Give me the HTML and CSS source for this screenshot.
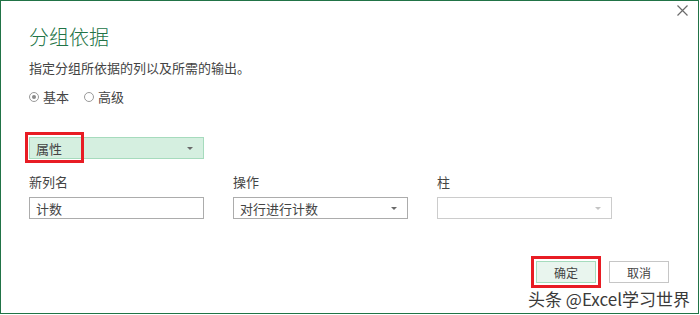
FILE: index.html
```html
<!DOCTYPE html>
<html>
<head>
    <title>分组依据</title>
    <link rel="stylesheet" href="styles.css">
</head>
<body>

<div class="dialog">
    <button class="close-btn" aria-label="关闭">
        <svg width="11" height="11" viewBox="0 0 11 11"><path d="M0.5 0.5 L10.5 10.5 M10.5 0.5 L0.5 10.5" stroke="#6b6b6b" stroke-width="1.2"/></svg>
    </button>

    <h1 class="title">分组依据</h1>
    <p class="subtitle">指定分组所依据的列以及所需的输出。</p>

    <div class="radio-row">
        <label class="radio"><span class="dot checked"></span>基本</label>
        <label class="radio"><span class="dot"></span>高级</label>
    </div>

    <div class="group-select">
        <span class="select-text">属性</span>
        <span class="arrow"></span>
        <span class="mark"></span>
    </div>

    <div class="fields">
        <div class="field">
            <label>新列名</label>
            <div class="box">计数</div>
        </div>
        <div class="field">
            <label>操作</label>
            <div class="box">对行进行计数<span class="arrow"></span></div>
        </div>
        <div class="field">
            <label>柱</label>
            <div class="box disabled"><span class="arrow"></span></div>
        </div>
    </div>

    <div class="footer">
        <button class="btn primary">确定</button>
        <button class="btn">取消</button>
    </div>

    <div class="watermark">头条 @Excel学习世界</div>
</div>

</body>
</html>
```

FILE: styles.css
```css
:root {
    --green: #217346;
    --text-color: #444444;
    --select-bg: #d5efe0;
    --select-border: #a6dbbd;
    --input-border: #acacac;
    --mark-red: #e81c24;
}

body {
    margin: 0;
    font-family: "Noto Sans CJK SC", "Microsoft YaHei", sans-serif;
    color: var(--text-color);
    background: #ffffff;
}

.dialog {
    position: relative;
    width: 699px;
    height: 314px;
    box-sizing: border-box;
    border: 1px solid var(--green);
    padding: 23px 29px 0 28px;
}

.close-btn {
    position: absolute;
    top: 4px;
    right: 10px;
    background: none;
    border: none;
    padding: 0;
    line-height: 0;
}

.title {
    margin: 0;
    font-size: 20px;
    font-weight: 300;
    line-height: 26px;
    color: var(--green);
}

.subtitle {
    margin: 9px 0 0 0;
    font-size: 13px;
    line-height: 18px;
}

.radio-row {
    display: flex;
    gap: 15px;
    margin-top: 12px;
    font-size: 13px;
    line-height: 16px;
}

.radio {
    display: flex;
    align-items: center;
    gap: 4px;
}

.dot {
    width: 10px;
    height: 10px;
    box-sizing: border-box;
    border: 1px solid #9a9a9a;
    border-radius: 50%;
    position: relative;
}

.dot.checked::after {
    content: "";
    position: absolute;
    left: 2px;
    top: 2px;
    width: 4px;
    height: 4px;
    border-radius: 50%;
    background: #8a8a8a;
}

.group-select {
    position: relative;
    display: flex;
    align-items: center;
    width: 175px;
    height: 22px;
    box-sizing: border-box;
    margin-top: 32px;
    padding: 0 10px 0 6px;
    background: var(--select-bg);
    border: 1px solid var(--select-border);
    font-size: 13px;
}

.select-text {
    flex: 1;
}

.arrow {
    width: 0;
    height: 0;
    border-left: 3px solid transparent;
    border-right: 3px solid transparent;
    border-top: 3px solid #6a6a6a;
}

.mark {
    position: absolute;
    left: -5px;
    top: -6px;
    width: 59px;
    height: 31px;
    box-sizing: border-box;
    border: 3px solid var(--mark-red);
}

.fields {
    display: grid;
    grid-template-columns: 175px 175px 175px;
    column-gap: 29px;
    margin-top: 14px;
}

.field label {
    display: block;
    font-size: 13px;
    line-height: 18px;
    margin-bottom: 6px;
}

.box {
    display: flex;
    align-items: center;
    justify-content: space-between;
    height: 22px;
    box-sizing: border-box;
    padding: 0 10px 0 6px;
    border: 1px solid var(--input-border);
    font-size: 13px;
}

.box.disabled {
    border-color: #cccccc;
    justify-content: flex-end;
}

.box.disabled .arrow {
    border-top-color: #c4c4c4;
}

.footer {
    display: flex;
    justify-content: flex-end;
    gap: 13px;
    margin-top: 42px;
}

.btn {
    width: 60px;
    height: 22px;
    padding: 0;
    font-family: inherit;
    font-size: 12px;
    color: var(--text-color);
    background: #ffffff;
    border: 1px solid #c6c6c6;
}

.btn.primary {
    background: #e9f5ee;
    border-color: var(--select-border);
    outline: 3px solid var(--mark-red);
    outline-offset: 2px;
}

.watermark {
    position: absolute;
    right: 8px;
    bottom: 4px;
    font-size: 17px;
    line-height: 20px;
    color: #3a3a3a;
    text-shadow: 0 0 2px #ffffff, 0 0 2px #ffffff;
}
```
